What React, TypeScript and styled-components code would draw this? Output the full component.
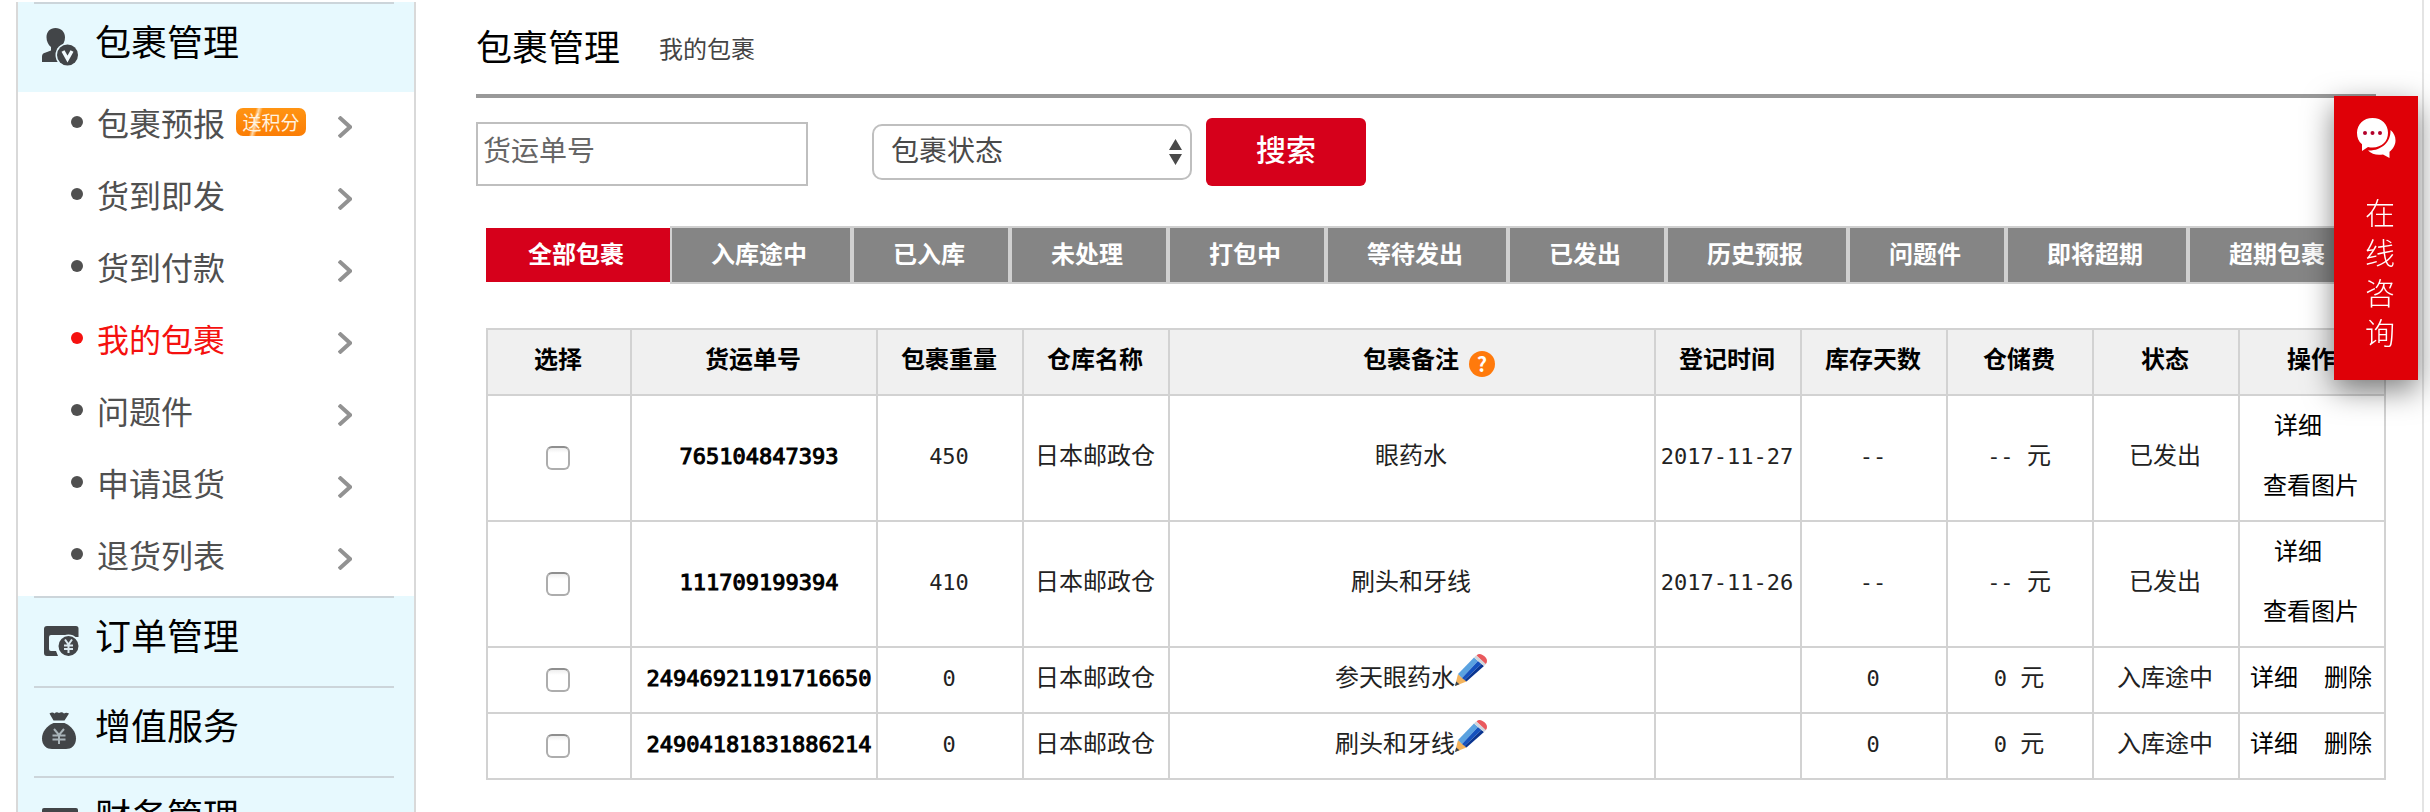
import React from "react";
import styled, { createGlobalStyle } from "styled-components";

const sans = `"Noto Sans CJK SC", sans-serif`;
const mono = `"DejaVu Sans Mono", "Noto Sans CJK SC", monospace`;

const GlobalStyle = createGlobalStyle`
  *, *::before, *::after { box-sizing: border-box; }
  body { margin: 0; background: #fff; font-family: ${sans}; color: #000; }
  button, input, select { font-family: inherit; }
  a { color: inherit; text-decoration: none; }
  ul { list-style: none; margin: 0; padding: 0; }
`;

const Page = styled.div`
  display: flex;
  align-items: flex-start;
  height: 100vh;
  overflow: hidden;
  margin: 0 6px 0 16px;
  border-right: 2px solid #e4e4e4;
`;

/* ---------- sidebar ---------- */

const Sidebar = styled.nav`
  flex: none;
  width: 400px;
  margin-top: 2px;
  border: solid #d9d9d9;
  border-width: 0 2px;
`;

const SectionLink = styled.a`
  display: block;
  height: 90px;
  padding: 0 20px 0 16px;
  background: #e7f9fe;
`;

const SectionInner = styled.span`
  display: flex;
  align-items: center;
  gap: 15px;
  padding-left: 6px;
  border-top: 2px solid #ccd5da;
  font-size: 36px;
  line-height: 72px;

  svg {
    flex: none;
    margin-top: 14px;
  }
`;

const SubLink = styled.a<{ $active?: boolean }>`
  display: flex;
  align-items: center;
  height: 72px;
  padding: 0 62px 12px 53px;
  font-size: 32px;
  line-height: 60px;
  color: ${(p) => (p.$active ? "#f5110f" : "#505050")};

  &::before {
    content: "";
    width: 12px;
    height: 12px;
    margin-right: 14px;
    border-radius: 50%;
    background: currentColor;
  }

  svg {
    margin: 10px 0 0 auto;
  }
`;

const PointsTag = styled.span`
  width: 70px;
  height: 28px;
  margin-left: 11px;
  border-radius: 7px;
  background:
    linear-gradient(105deg, transparent 26%, #ffd9a8 30%, transparent 35%),
    linear-gradient(#ff9413, #fb7d05);
  color: #fff3e0;
  font-size: 19px;
  line-height: 28px;
  text-align: center;
`;

/* ---------- main column ---------- */

const Main = styled.main`
  flex: 1;
  min-width: 0;
  padding: 0 36px 0 60px;
`;

const Heading = styled.header`
  display: flex;
  align-items: center;
  gap: 39px;
  margin-right: 10px;
  padding-bottom: 4px;
  border-bottom: 4px solid #999;
`;

const Title = styled.h1`
  margin: 0;
  font-size: 36px;
  font-weight: 400;
  line-height: 90px;
`;

const Crumb = styled.span`
  padding-top: 6px;
  font-size: 24px;
  line-height: 36px;
  color: #444;
`;

const SearchForm = styled.form`
  display: flex;
  align-items: center;
  padding-top: 20px;
`;

const NumberInput = styled.input`
  align-self: flex-end;
  width: 332px;
  height: 64px;
  padding: 0 5px 10px;
  border: 2px solid #bfbfbf;
  font-size: 28px;
  color: #555;

  &::placeholder {
    color: #666;
    opacity: 1;
  }
`;

const SelectBox = styled.div`
  position: relative;
  width: 320px;
  margin: 0 14px 0 64px;

  svg {
    position: absolute;
    top: 14px;
    right: 10px;
    pointer-events: none;
  }
`;

const StatusSelect = styled.select`
  display: block;
  appearance: none;
  width: 100%;
  height: 56px;
  padding: 0 32px 6px 17px;
  border: 2px solid #bfbfbf;
  border-radius: 10px;
  background: #fff;
  color: #4a4a4a;
  font-size: 28px;
`;

const SearchButton = styled.button`
  width: 160px;
  height: 68px;
  padding: 0 0 8px;
  border: 0;
  border-radius: 6px;
  background: #d6001b;
  color: #fff;
  font-size: 30px;
  font-weight: 500;
`;

const Tabs = styled.div`
  display: flex;
  margin: 40px 0 44px 10px;
`;

const Tab = styled.button<{ $active?: boolean }>`
  flex: none;
  margin: ${(p) => (p.$active ? "2px 0" : "0")};
  padding: ${(p) => (p.$active ? "0 46px 4px 42px" : "0 43px 4px 39px")};
  border: ${(p) => (p.$active ? "0" : "2px solid #d0d0d0")};
  background: ${(p) => (p.$active ? "#d6001b" : "#858585")};
  color: #fff;
  font-size: 24px;
  font-weight: 700;
  line-height: 50px;
  white-space: nowrap;
`;

/* ---------- table ---------- */

const TableWrap = styled.div`
  padding-left: 10px;
`;

const Table = styled.table`
  width: 100%;
  table-layout: fixed;
  border-collapse: collapse;
  font-size: 24px;
  line-height: 56px;
  text-align: center;
  color: #222;
`;

const Col = styled.col<{ $width?: number }>`
  width: ${(p) => (p.$width ? `${p.$width}px` : "auto")};
`;

const HeadCell = styled.th`
  padding: 0 2px 8px 0;
  border: 2px solid #d2d2d2;
  background: #f0f0f0;
  color: #000;
  font-weight: 700;
  white-space: nowrap;
`;

const Cell = styled.td`
  padding: 0 2px 8px 0;
  border: 2px solid #d2d2d2;
  white-space: nowrap;
`;

const NumberCell = styled(Cell)`
  padding-left: 12px;
  color: #000;
`;

const Digits = styled.span<{ $strong?: boolean }>`
  font-family: ${mono};
  font-size: 22px;
  line-height: 1;
  -webkit-text-stroke: ${(p) => (p.$strong ? "1px" : "0")};
`;

const HeadLabel = styled.span`
  display: inline-flex;
  align-items: center;
  gap: 10px;
  padding-left: 36px;
  vertical-align: top;
`;

const HelpButton = styled.button`
  width: 26px;
  height: 26px;
  margin-top: 12px;
  padding: 0;
  border: 0;
  border-radius: 50%;
  background: #ff7a0c;
  color: #fff;
  font-size: 20px;
  font-weight: 700;
  line-height: 26px;
`;

const Remark = styled.span`
  display: flex;
  align-items: center;
  justify-content: center;
`;

const EditButton = styled.button`
  height: 44px;
  padding: 0 0 12px;
  border: 0;
  background: none;

  svg {
    display: block;
  }
`;

const Check = styled.input`
  appearance: none;
  display: block;
  width: 24px;
  height: 24px;
  margin: 8px auto 0;
  border: 2px solid #adadad;
  border-top-color: #8f8f8f;
  border-radius: 6px;
  background: linear-gradient(#eee, #fff 5px);
`;

const Actions = styled.span`
  display: flex;
  flex-wrap: wrap;
  justify-content: center;
  row-gap: 4px;
  color: #000;
`;

const ActionLink = styled.a`
  &:not(:last-child) {
    margin-right: 26px;
  }
`;

/* ---------- floating consult button ---------- */

const Consult = styled.button`
  position: fixed;
  top: 96px;
  right: 12px;
  display: flex;
  flex-direction: column;
  align-items: center;
  gap: 32px;
  width: 84px;
  height: 284px;
  padding: 22px 0 0;
  border: 0;
  background: #df0007;
  box-shadow: 0 10px 30px rgba(0, 0, 0, 0.5);
  color: #fff;
`;

const ConsultText = styled.span`
  width: 38px;
  padding-left: 8px;
  font-size: 30px;
  font-weight: 300;
  line-height: 40px;
  word-break: break-all;
`;

/* ---------- drawings ---------- */

const ink = "#424548";

const UserIcon = () => (
  <svg width="40" height="40" viewBox="0 0 40 40" aria-hidden="true">
    <path
      fill={ink}
      d="M15.500 1c5.500 0 9.500 3.800 9.500 9.300 0 4-1.800 7.700-4.200 9.700v3L27 26v9H2v-5.500c0-2 1-3 3-3.700l6-2.300V20c-2.700-2-4.500-5.700-4.500-9.700C6.500 4.800 10 1 15.500 1z"
    />
    <circle cx="27.500" cy="28" r="12" fill="#e7f9fe" />
    <circle cx="27.500" cy="28" r="10.500" fill={ink} />
    <path d="M23 24l4.500 8 4.500-8" fill="none" stroke="#f2fbfe" strokeWidth="3.400" />
  </svg>
);

const OrderIcon = () => (
  <svg width="40" height="40" viewBox="0 0 40 40" aria-hidden="true">
    <path
      fill={ink}
      d="M7 5h29q2.500 0 2.500 2.500V16H34l-3-2H11q-2 0-2 2v12q0 2 2 2h5l2 5H7q-3 0-3-3V8q0-3 3-3z"
    />
    <circle cx="28.500" cy="25" r="11.500" fill="#e7f9fe" />
    <circle cx="28.500" cy="25" r="10" fill={ink} />
    <path
      d="M25 18.500l3.500 5 3.500-5M28.500 23v9M24 24.500h9M24 28h9"
      fill="none"
      stroke="#dbeaf0"
      strokeWidth="2"
    />
  </svg>
);

const BagIcon = () => (
  <svg width="40" height="40" viewBox="0 0 40 40" aria-hidden="true">
    <path
      fill={ink}
      d="M9.500 2.500q3-2 5 0 2-2 4.500-.5 3-1.500 5 .5 2-1.500 5 0l-4.500 7h-11z"
    />
    <path
      fill={ink}
      d="M13.500 12h11c7 3 11.500 9 11.500 15.500C36 35 31 38 26 38H12C7 38 2 35 2 27.500 2 21 6.500 15 13.500 12z"
    />
    <path
      d="M14 18l5 6 5-6M19 23v10M12.500 24.500h13M12.500 28.500h13"
      fill="none"
      stroke="#a9b4b9"
      strokeWidth="2"
    />
  </svg>
);

const FinanceIcon = () => (
  <svg width="40" height="40" viewBox="0 0 40 40" aria-hidden="true">
    <path fill={ink} d="M4 7h32q2 0 2 2v22q0 4-4 4H6q-4 0-4-4V9q0-2 2-2z" />
    <path d="M8 16h24M8 23h14" stroke="#e7f9fe" strokeWidth="3" />
  </svg>
);

const ChevronIcon = () => (
  <svg width="14" height="22" viewBox="0 0 14 22" aria-hidden="true">
    <path d="M1 1l11 10L1 21" fill="none" stroke="#929292" strokeWidth="4" />
  </svg>
);

const SortArrows = () => (
  <svg width="13" height="28" viewBox="0 0 13 28" aria-hidden="true">
    <path d="M6.500 1L13 12H0zM6.500 27L0 16h13z" fill="#4a4a4a" />
  </svg>
);

const PencilIcon = () => (
  <svg width="32" height="32" viewBox="0 0 32 32" aria-hidden="true">
    <path d="M0 32l3-12 8.500 7.500z" fill="#f3b35d" />
    <path d="M0 32l1.200-4.600 3.300 2.900z" fill="#39434f" />
    <path d="M3 20L19 3.500l4 3.500L7 24z" fill="#5aa2e0" />
    <path d="M7 24L23 7l3.500 3L9.500 26z" fill="#1551bd" />
    <path d="M9.500 26L26.500 10l2.500 2-17.500 15.500z" fill="#0a3590" />
    <path d="M19 3.500L21 1.500l10 8.500-2 2z" fill="#cfd5dc" />
    <path d="M21.500 1.500q2.500-2.500 6-.5 4.500 2.500 4.500 6 0 2-1.200 3z" fill="#e9595d" />
  </svg>
);

const ChatIcon = () => (
  <svg width="40" height="41" viewBox="0 0 40 41" aria-hidden="true">
    <path
      fill="#fff"
      d="M34.500 12c3.500 3 5 6.500 5 10.500 0 4.500-2.500 8.500-6 11.200V40l-6.500-3.600c-6 1.200-11.500-.4-15-3.900 13.500.5 23-8.500 22.500-20.500z"
    />
    <path
      fill="#fff"
      d="M16.500 0C26 0 32 6.300 32 14.800S26 29.500 16.500 29.500c-1.500 0-3-.2-4.500-.6L6 33v-6.800C2.500 23.500 1 19.500 1 14.800 1 6.300 7.500 0 16.500 0z"
    />
    <circle cx="9" cy="15" r="2" fill="#b3002a" />
    <circle cx="16.500" cy="15" r="2" fill="#b3002a" />
    <circle cx="24" cy="15" r="2" fill="#b3002a" />
  </svg>
);

/* ---------- data ---------- */

const subItems = [
  { label: "包裹预报", tag: "送积分" },
  { label: "货到即发" },
  { label: "货到付款" },
  { label: "我的包裹", active: true },
  { label: "问题件" },
  { label: "申请退货" },
  { label: "退货列表" },
];

const tabs = [
  "全部包裹",
  "入库途中",
  "已入库",
  "未处理",
  "打包中",
  "等待发出",
  "已发出",
  "历史预报",
  "问题件",
  "即将超期",
  "超期包裹",
];

const columnWidths = [144, 246, 146, 146, undefined, 146, 146, 146, 146, 146];

const rows = [
  { no: "765104847393", weight: "450", remark: "眼药水", date: "2017-11-27", days: "--", status: "已发出", actions: ["详细", "查看图片"] },
  { no: "111709199394", weight: "410", remark: "刷头和牙线", date: "2017-11-26", days: "--", status: "已发出", actions: ["详细", "查看图片"] },
  { no: "24946921191716650", weight: "0", remark: "参天眼药水", date: "", days: "0", status: "入库途中", actions: ["详细", "删除"], editable: true },
  { no: "24904181831886214", weight: "0", remark: "刷头和牙线", date: "", days: "0", status: "入库途中", actions: ["详细", "删除"], editable: true },
];

const Section = ({ icon, label }: { icon: React.ReactNode; label: string }) => (
  <SectionLink href="#">
    <SectionInner>
      {icon}
      {label}
    </SectionInner>
  </SectionLink>
);

export default function App() {
  return (
    <>
      <GlobalStyle />
      <Page>
        <Sidebar>
          <Section icon={<UserIcon />} label="包裹管理" />
          <ul>
            {subItems.map((item) => (
              <li key={item.label}>
                <SubLink href="#" $active={item.active}>
                  {item.label}
                  {item.tag && <PointsTag>{item.tag}</PointsTag>}
                  <ChevronIcon />
                </SubLink>
              </li>
            ))}
          </ul>
          <Section icon={<OrderIcon />} label="订单管理" />
          <Section icon={<BagIcon />} label="增值服务" />
          <Section icon={<FinanceIcon />} label="财务管理" />
        </Sidebar>

        <Main>
          <Heading>
            <Title>包裹管理</Title>
            <Crumb>我的包裹</Crumb>
          </Heading>

          <SearchForm onSubmit={(e) => e.preventDefault()}>
            <NumberInput type="text" placeholder="货运单号" aria-label="货运单号" />
            <SelectBox>
              <StatusSelect aria-label="包裹状态">
                <option>包裹状态</option>
              </StatusSelect>
              <SortArrows />
            </SelectBox>
            <SearchButton type="submit">搜索</SearchButton>
          </SearchForm>

          <Tabs>
            {tabs.map((label, i) => (
              <Tab key={label} type="button" $active={i === 0}>
                {label}
              </Tab>
            ))}
          </Tabs>

          <TableWrap>
            <Table>
              <colgroup>
                {columnWidths.map((w, i) => (
                  <Col key={i} $width={w} />
                ))}
              </colgroup>
              <thead>
                <tr>
                  <HeadCell>选择</HeadCell>
                  <HeadCell>货运单号</HeadCell>
                  <HeadCell>包裹重量</HeadCell>
                  <HeadCell>仓库名称</HeadCell>
                  <HeadCell>
                    <HeadLabel>
                      包裹备注
                      <HelpButton type="button">?</HelpButton>
                    </HeadLabel>
                  </HeadCell>
                  <HeadCell>登记时间</HeadCell>
                  <HeadCell>库存天数</HeadCell>
                  <HeadCell>仓储费</HeadCell>
                  <HeadCell>状态</HeadCell>
                  <HeadCell>操作</HeadCell>
                </tr>
              </thead>
              <tbody>
                {rows.map((row) => (
                  <tr key={row.no}>
                    <Cell>
                      <Check type="checkbox" aria-label={row.no} />
                    </Cell>
                    <NumberCell>
                      <Digits $strong>{row.no}</Digits>
                    </NumberCell>
                    <Cell>
                      <Digits>{row.weight}</Digits>
                    </Cell>
                    <Cell>日本邮政仓</Cell>
                    <Cell>
                      <Remark>
                        {row.remark}
                        {row.editable && (
                          <EditButton type="button" aria-label="编辑">
                            <PencilIcon />
                          </EditButton>
                        )}
                      </Remark>
                    </Cell>
                    <Cell>
                      <Digits>{row.date}</Digits>
                    </Cell>
                    <Cell>
                      <Digits>{row.days}</Digits>
                    </Cell>
                    <Cell>
                      <Digits>{row.days} </Digits>元
                    </Cell>
                    <Cell>{row.status}</Cell>
                    <Cell>
                      <Actions>
                        {row.actions.map((a) => (
                          <ActionLink key={a} href="#">
                            {a}
                          </ActionLink>
                        ))}
                      </Actions>
                    </Cell>
                  </tr>
                ))}
              </tbody>
            </Table>
          </TableWrap>
        </Main>
      </Page>

      <Consult type="button">
        <ChatIcon />
        <ConsultText>在线咨询</ConsultText>
      </Consult>
    </>
  );
}
